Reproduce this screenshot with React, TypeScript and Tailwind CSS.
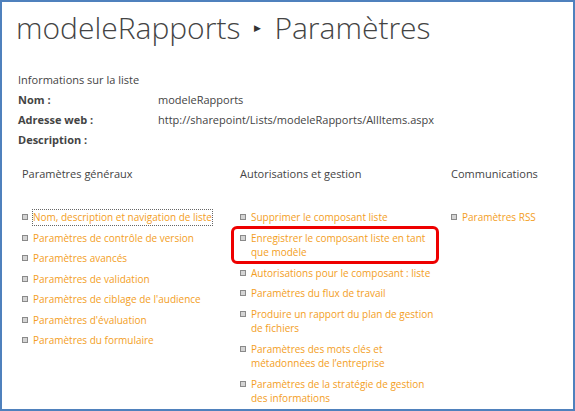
import React from "react";

const Bullet = () => (
  <span className="mt-[4px] mr-[5px] inline-block h-[6px] w-[6px] shrink-0 border border-[#8a8a8a] bg-[#d4d4d4]" />
);

type Item = { text: string; focus?: boolean; highlight?: boolean };

const col1: Item[] = [
  { text: "Nom, description et navigation de liste", focus: true },
  { text: "Paramètres de contrôle de version" },
  { text: "Paramètres avancés" },
  { text: "Paramètres de validation" },
  { text: "Paramètres de ciblage de l'audience" },
  { text: "Paramètres d'évaluation" },
  { text: "Paramètres du formulaire" },
];

const col2: Item[] = [
  { text: "Supprimer le composant liste" },
  { text: "Enregistrer le composant liste en tant que modèle", highlight: true },
  { text: "Autorisations pour le composant : liste" },
  { text: "Paramètres du flux de travail" },
  { text: "Produire un rapport du plan de gestion de fichiers" },
  { text: "Paramètres des mots clés et métadonnées de l’entreprise" },
  { text: "Paramètres de la stratégie de gestion des informations" },
];

const col3: Item[] = [{ text: "Paramètres RSS" }];

function LinkList({ items, width }: { items: Item[]; width: string }) {
  return (
    <ul className={`flex flex-col gap-[6px] ${width}`}>
      {items.map((it) => (
        <li key={it.text} className="relative flex items-start">
          {it.highlight && (
            <span className="pointer-events-none absolute -left-[9px] -top-[5px] h-[38px] w-[208px] rounded-[6px] border-[3px] border-[#ee0000]" />
          )}
          <Bullet />
          <span
            className={`text-[10px] leading-[14.5px] text-[#f39e1e] ${
              it.focus ? "outline outline-1 outline-dotted outline-[#666]" : ""
            }`}
          >
            {it.text}
          </span>
        </li>
      ))}
    </ul>
  );
}

export default function App() {
  return (
    <div
      className="h-[411px] w-[575px] overflow-hidden border-2 border-[#4f81bd] bg-white text-[#444]"
      style={{ fontFamily: '"Open Sans", "Noto Sans", sans-serif' }}
    >
      <div className="flex items-center pl-[14px] pt-[6px] text-[30px] font-light leading-[40px] text-[#444]">
        <span>modeleRapports</span>
        <span className="ml-[14px] mr-[13px] text-[9px] text-[#333]">▶</span>
        <span>Paramètres</span>
      </div>

      <div className="pl-[16px] pt-[22px] text-[11px] leading-[20px]">
        <div>Informations sur la liste</div>
        <div className="flex">
          <span className="w-[140px] font-bold">Nom :</span>
          <span>modeleRapports</span>
        </div>
        <div className="flex">
          <span className="w-[140px] font-bold">Adresse web :</span>
          <span>http://sharepoint/Lists/modeleRapports/AllItems.aspx</span>
        </div>
        <div className="flex">
          <span className="w-[140px] font-bold">Description :</span>
        </div>
      </div>

      <div className="flex pl-[20px] pt-[14px]">
        <div className="w-[218px]">
          <div className="text-[11px] leading-[20px]">Paramètres généraux</div>
          <div className="pt-[26px]">
            <LinkList items={col1} width="w-[200px]" />
          </div>
        </div>
        <div className="w-[211px]">
          <div className="text-[11px] leading-[20px]">Autorisations et gestion</div>
          <div className="pt-[26px]">
            <LinkList items={col2} width="w-[198px]" />
          </div>
        </div>
        <div className="flex-1">
          <div className="text-[11px] leading-[20px]">Communications</div>
          <div className="pt-[26px]">
            <LinkList items={col3} width="w-[110px]" />
          </div>
        </div>
      </div>
    </div>
  );
}
